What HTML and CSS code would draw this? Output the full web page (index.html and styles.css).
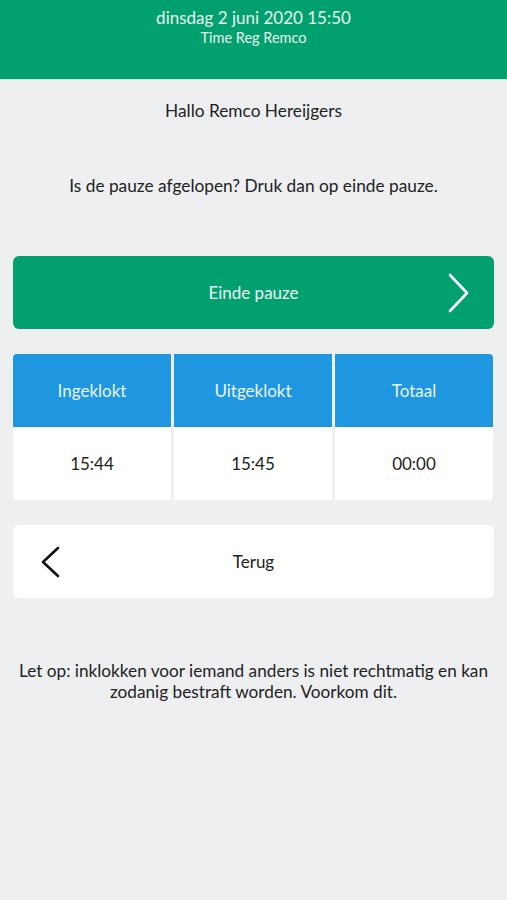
FILE: index.html
```html
<!DOCTYPE html>
<html lang="nl">
<head>
    <meta charset="UTF-8">
    <meta name="viewport" content="width=device-width, initial-scale=1.0">
    <title>Time Reg Remco</title>
    <link rel="stylesheet" href="styles.css">
</head>
<body>

    <header class="topbar">
        <div class="topbar-date">dinsdag 2 juni 2020 15:50</div>
        <div class="topbar-app">Time Reg Remco</div>
    </header>

    <main class="content">
        <p class="greeting">Hallo Remco Hereijgers</p>
        <p class="question">Is de pauze afgelopen? Druk dan op einde pauze.</p>

        <div class="btn btn-green">
            <span class="btn-label">Einde pauze</span>
            <svg class="chev chev-right" width="22" height="40" viewBox="0 0 22 40">
                <polyline points="2,2 19,20 2,38" fill="none" stroke="#fff" stroke-width="2.6" stroke-linecap="round" stroke-linejoin="round"/>
            </svg>
        </div>

        <div class="times">
            <div class="times-col">
                <div class="times-head">Ingeklokt</div>
                <div class="times-val">15:44</div>
            </div>
            <div class="times-col">
                <div class="times-head">Uitgeklokt</div>
                <div class="times-val">15:45</div>
            </div>
            <div class="times-col">
                <div class="times-head">Totaal</div>
                <div class="times-val">00:00</div>
            </div>
        </div>

        <div class="btn btn-white">
            <svg class="chev chev-left" width="20" height="32" viewBox="0 0 20 32">
                <polyline points="18,2 3,16 18,30" fill="none" stroke="#111" stroke-width="2.6" stroke-linecap="round" stroke-linejoin="round"/>
            </svg>
            <span class="btn-label">Terug</span>
        </div>

        <p class="warning">Let op: inklokken voor iemand anders is niet rechtmatig en kan zodanig bestraft worden. Voorkom dit.</p>
    </main>

</body>
</html>
```

FILE: styles.css
```css
body {
    margin: 0;
    font-family: Lato, "Open Sans", sans-serif;
    background-color: #eeeff1;
    color: #222;
    min-height: 900px;
}
.topbar {
    background-color: #03a06f;
    color: #e4f5ee;
    height: 80px;
    text-align: center;
    padding-top: 7px;
    box-sizing: border-box;
    border-bottom: 1px solid #bfe9dc;
}
.topbar-date {
    font-size: 17px;
    line-height: 22px;
}
.topbar-app {
    font-size: 14.5px;
    line-height: 17px;
}
.content {
    padding: 0 13px;
}
.greeting {
    margin: 20px 0 0;
    text-align: center;
    font-size: 17.3px;
    line-height: 22px;
}
.question {
    margin: 53px 0 0;
    text-align: center;
    font-size: 17.3px;
    line-height: 22px;
}
.btn {
    position: relative;
    height: 73px;
    border-radius: 6px;
    display: flex;
    align-items: center;
    justify-content: center;
    font-size: 17px;
}
.btn-green {
    margin-top: 59px;
    background-color: #03a06f;
    color: #eaf7f1;
}
.btn-white {
    margin-top: 25px;
    background-color: #fff;
    color: #222;
}
/* pijltjes liggen over de knop heen */
.chev {
    position: absolute;
    top: 50%;
    transform: translateY(-50%);
}
.chev-right {
    right: 24px;
}
.chev-left {
    left: 27px;
}
.times {
    margin-top: 25px;
    display: grid;
    grid-template-columns: 1fr 1fr 1fr;
    gap: 3px;
    border-radius: 4px;
    overflow: hidden;
    width: 480px;
}
.times-head {
    background-color: #1e96e0;
    color: #eaf4fb;
    height: 73px;
    display: flex;
    align-items: center;
    justify-content: center;
    font-size: 17px;
}
.times-val {
    background-color: #fff;
    height: 73px;
    display: flex;
    align-items: center;
    justify-content: center;
    font-size: 17px;
}
.warning {
    margin: 62px -8px 0;
    text-align: center;
    font-size: 17.2px;
    line-height: 21px;
}
```
